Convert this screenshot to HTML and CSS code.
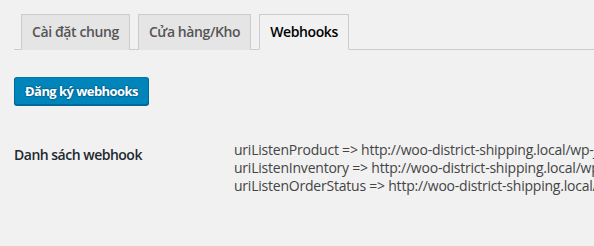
FILE: index.html
```html
<!DOCTYPE html>
<html lang="vi">
<head>
<meta charset="utf-8">
<link rel="stylesheet" href="styles.css">
</head>
<body>
<div class="wrap">
  <nav class="nav-tab-wrapper">
    <a class="nav-tab">Cài đặt chung</a>
    <a class="nav-tab">Cửa hàng/Kho</a>
    <a class="nav-tab nav-tab-active">Webhooks</a>
  </nav>
  <div class="actions">
    <button class="button-primary">Đăng ký webhooks</button>
  </div>
  <div class="form-row">
    <div class="form-label">Danh sách webhook</div>
    <div class="form-value">
      <div>uriListenProduct =&gt; http://woo-district-shipping.local/wp-json/wc/v3/webhooks/product</div>
      <div>uriListenInventory =&gt; http://woo-district-shipping.local/wp-json/wc/v3/webhooks/inventory</div>
      <div>uriListenOrderStatus =&gt; http://woo-district-shipping.local/wp-json/wc/v3/webhooks/order</div>
    </div>
  </div>
</div>
</body>
</html>
```
FILE: styles.css
```css
html, body {
  margin: 0;
  padding: 0;
  background: #f1f1f1;
  overflow: hidden;
}
body {
  font-family: "Open Sans", "Noto Sans", sans-serif;
  font-size: 13px;
  color: #444;
  width: 594px;
  height: 246px;
}
.wrap {
  padding: 14px 0 0 14px;
}
.nav-tab-wrapper {
  display: flex;
  border-bottom: 1px solid #ccc;
  padding-left: 7px;
  gap: 8px;
}
.nav-tab {
  display: block;
  border: 1px solid #ccc;
  border-bottom: none;
  background: #e5e5e5;
  color: #555;
  font-size: 14px;
  line-height: 24px;
  font-weight: 600;
  letter-spacing: -0.4px;
  padding: 5px 10px;
  margin-bottom: -1px;
  text-decoration: none;
}
.nav-tab-active {
  background: #f1f1f1;
  color: #000;
  border-bottom: 1px solid #f1f1f1;
}
.actions {
  padding-top: 27px;
}
.button-primary {
  display: block;
  height: 28px;
  padding: 0 10px 1px;
  font-family: inherit;
  font-size: 13px;
  font-weight: 700;
  letter-spacing: -0.55px;
  line-height: 26px;
  color: #fff;
  background: #0085ba;
  border: 1px solid;
  border-color: #0073aa #006799 #006799;
  border-radius: 3px;
  box-shadow: 0 1px 0 #006799;
  text-shadow: 0 -1px 1px #006799, 1px 0 1px #006799, 0 1px 1px #006799, -1px 0 1px #006799;
}
.form-row {
  display: grid;
  grid-template-columns: 210px 1fr;
  margin-top: 21px;
  font-size: 14px;
  line-height: 1.3;
}
.form-label {
  padding: 20px 10px 20px 0;
  font-weight: 600;
  color: #23282d;
  letter-spacing: -0.5px;
}
.form-value {
  padding: 15px 0 15px 10px;
  white-space: nowrap;
  overflow: hidden;
  color: #444;
  letter-spacing: -0.22px;
}
```
